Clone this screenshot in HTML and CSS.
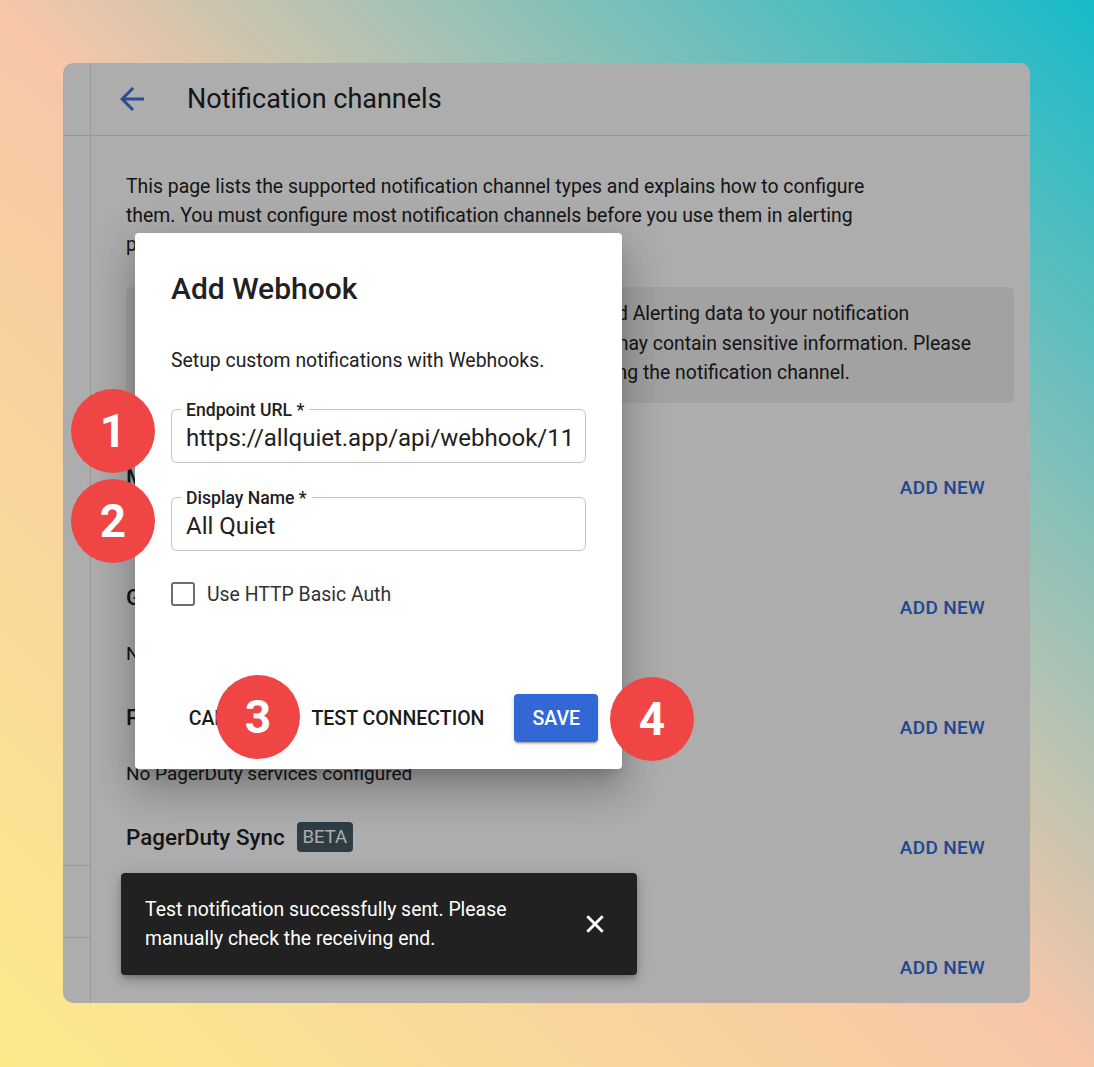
FILE: index.html
```html
<!DOCTYPE html>
<html lang="en">
  <head>
    <meta charset="UTF-8" />
    <meta name="viewport" content="width=device-width, initial-scale=1.0" />
    <title>Notification channels</title>
    <link rel="stylesheet" href="styles.css">
  </head>
  <body>
    <div class="app">
      <aside class="rail">
        <div class="rail-top"></div>
        <div class="rail-fill"></div>
        <div class="rail-item"></div>
        <div class="rail-item last"></div>
      </aside>

      <main class="main">
        <header class="topbar">
          <svg class="back" viewBox="0 0 24 24" width="36" height="36">
            <path d="M20 11H7.83l5.59-5.59L12 4l-8 8 8 8 1.41-1.41L7.83 13H20v-2z" />
          </svg>
          <h1>Notification channels</h1>
        </header>

        <section class="content">
          <p class="intro">
            This page lists the supported notification channel types and explains how to configure
            them. You must configure most notification channels before you use them in alerting
            policies.
          </p>

          <div class="notice">
            By connecting a channel, All Quiet will send Incident and Alerting data to your notification<br />
            channels. Please be aware, that all these notifications may contain sensitive information. Please<br />
            review who has access to this channel before configuring the notification channel.
          </div>

          <ul class="channels">
            <li class="channel">
              <div>
                <h2>Microsoft Teams</h2>
                <p>No Microsoft Teams channels configured</p>
              </div>
              <button class="add">Add new</button>
            </li>
            <li class="channel">
              <div>
                <h2>Google Chat</h2>
                <p>No Google Chat spaces configured</p>
              </div>
              <button class="add">Add new</button>
            </li>
            <li class="channel">
              <div>
                <h2>PagerDuty</h2>
                <p>No PagerDuty services configured</p>
              </div>
              <button class="add">Add new</button>
            </li>
            <li class="channel">
              <div>
                <h2>PagerDuty Sync <span class="chip">BETA</span></h2>
                <p>No PagerDuty Sync configured</p>
              </div>
              <button class="add">Add new</button>
            </li>
            <li class="channel">
              <div>
                <h2>Slack</h2>
              </div>
              <button class="add">Add new</button>
            </li>
          </ul>
        </section>
      </main>

      <div class="scrim"></div>

      <div class="dialog">
        <h3>Add Webhook</h3>
        <p class="dialog-text">Setup custom notifications with Webhooks.</p>

        <div class="field">
          <label for="endpoint">Endpoint URL *</label>
          <input id="endpoint" type="text" value="https://allquiet.app/api/webhook/11" />
        </div>

        <div class="field">
          <label for="display-name">Display Name *</label>
          <input id="display-name" type="text" value="All Quiet" />
        </div>

        <label class="check">
          <span class="box"></span>
          Use HTTP Basic Auth
        </label>

        <div class="actions">
          <button class="text-btn cancel">Cancel</button>
          <button class="text-btn test">Test connection</button>
          <button class="save">Save</button>
        </div>
      </div>

      <div class="snackbar">
        <p>Test notification successfully sent. Please manually check the receiving end.</p>
        <button class="close" aria-label="Close">
          <svg viewBox="0 0 20 20" width="22" height="22">
            <path d="M3 3L17 17M17 3L3 17" />
          </svg>
        </button>
      </div>

      <span class="step step-1">1</span>
      <span class="step step-2">2</span>
      <span class="step step-3">3</span>
      <span class="step step-4">4</span>
    </div>
  </body>
</html>
```

FILE: styles.css
```css
* {
  box-sizing: border-box;
}
body {
  margin: 0;
  width: 1094px;
  height: 1067px;
  overflow: hidden;
  font-family: Roboto, "Liberation Sans", sans-serif;
  color: #212121;
  background: linear-gradient(to top right, #fde98c 0%, #f6c6a8 50%, #16bac8 100%);
}
.app {
  position: relative;
  display: flex;
  margin: 63px 0 0 63px;
  width: 967px;
  height: 940px;
  border-radius: 10px;
  overflow: hidden;
  background: white;
}

/* left rail */
.rail {
  display: flex;
  flex-direction: column;
  width: 28px;
  border-right: 1px solid #e2e2e2;
}
.rail-top {
  height: 73px;
  border-bottom: 1px solid #e2e2e2;
}
.rail-fill {
  flex: 1;
}
.rail-item {
  height: 72px;
  border-top: 1px solid #e2e2e2;
}
.rail-item.last {
  height: 66px;
}

/* main column */
.main {
  flex: 1;
  min-width: 0;
}
.topbar {
  display: flex;
  align-items: center;
  height: 73px;
  padding-left: 23px;
  border-bottom: 1px solid #e2e2e2;
}
.back {
  fill: #4272da;
}
.topbar h1 {
  margin: 0 0 0 37px;
  font-size: 27px;
  font-weight: 400;
}
.content {
  padding: 36px 16px 0 35px;
}
.intro {
  margin: 0;
  max-width: 770px;
  font-size: 19.4px;
  line-height: 29px;
}
.notice {
  margin-top: 28px;
  height: 116px;
  padding: 12px 20px 0 20px;
  border-radius: 6px;
  background: #efefef;
  font-size: 19.4px;
  line-height: 29.5px;
  white-space: nowrap;
  overflow: hidden;
}
.channels {
  list-style: none;
  margin: 34px 0 0;
  padding: 0;
}
.channel {
  display: flex;
  justify-content: space-between;
  align-items: flex-start;
  height: 120px;
}
.channel h2 {
  display: flex;
  align-items: center;
  margin: 25px 0 0;
  height: 30px;
  font-size: 22.4px;
  font-weight: 500;
}
.channel p {
  margin: 29px 0 0;
  font-size: 19px;
  line-height: 26px;
}
.chip {
  margin-left: 12px;
  padding: 0 6px;
  height: 30px;
  line-height: 30px;
  border-radius: 4px;
  background: #455a64;
  color: #fff;
  font-size: 18.5px;
  font-weight: 400;
}
.add {
  margin: 32px 21px 0 0;
  height: 36px;
  padding: 0 8px;
  border: none;
  background: none;
  color: #3367d6;
  font-family: inherit;
  font-size: 19px;
  font-weight: 500;
  letter-spacing: 0.3px;
  text-transform: uppercase;
}

/* overlays */
.scrim {
  position: absolute;
  inset: 0;
  background: rgba(0, 0, 0, 0.32);
  z-index: 1;
}
.dialog {
  position: absolute;
  left: 72px;
  top: 170px;
  width: 487px;
  height: 536px;
  padding: 39px 36px 0;
  background: white;
  border-radius: 4px;
  box-shadow: 0 11px 15px -7px rgba(0, 0, 0, 0.2), 0 24px 38px 3px rgba(0, 0, 0, 0.14),
    0 9px 46px 8px rgba(0, 0, 0, 0.12);
  z-index: 2;
}
.dialog h3 {
  margin: 0;
  font-size: 30px;
  line-height: 34px;
  font-weight: 500;
}
.dialog-text {
  margin: 42px 0 0;
  font-size: 19.4px;
  line-height: 26px;
}
.field {
  position: relative;
  margin-top: 35px;
  height: 54px;
  border: 1px solid #c4c4c4;
  border-radius: 6px;
}
.field + .field {
  margin-top: 34px;
}
.field label {
  position: absolute;
  left: 9px;
  top: -10px;
  padding: 0 5px;
  background: white;
  font-size: 17.6px;
  line-height: 20px;
  font-weight: 500;
}
.field input {
  width: 100%;
  height: 52px;
  padding: 4px 1px 0 14px;
  border: none;
  outline: none;
  background: none;
  border-radius: 6px;
  font-family: inherit;
  font-size: 24px;
  color: #212121;
}
.check {
  display: flex;
  align-items: center;
  gap: 12px;
  margin-top: 31px;
  font-size: 19.4px;
  color: #333;
}
.box {
  width: 24px;
  height: 24px;
  border: 2px solid #6e6e6e;
  border-radius: 3px;
}
.actions {
  display: flex;
  justify-content: flex-end;
  align-items: center;
  margin: 88px -12px 0 0;
}
.text-btn {
  height: 48px;
  padding: 0 12px;
  border: none;
  background: none;
  color: #1a1a1a;
  font-family: inherit;
  font-size: 19.5px;
  font-weight: 500;
  text-transform: uppercase;
}
.cancel {
  margin-right: 25px;
}
.test {
  margin-right: 18px;
}
.save {
  height: 48px;
  padding: 0 18px;
  border: none;
  border-radius: 4px;
  background: #3367d6;
  color: white;
  font-family: inherit;
  font-size: 19.5px;
  font-weight: 500;
  text-transform: uppercase;
  box-shadow: 0 3px 1px -2px rgba(0, 0, 0, 0.2), 0 2px 2px rgba(0, 0, 0, 0.14),
    0 1px 5px rgba(0, 0, 0, 0.12);
}

.snackbar {
  position: absolute;
  left: 58px;
  top: 810px;
  width: 516px;
  height: 102px;
  display: flex;
  align-items: center;
  justify-content: space-between;
  padding: 0 18px 0 24px;
  background: #212121;
  border-radius: 4px;
  box-shadow: 0 3px 5px -1px rgba(0, 0, 0, 0.2), 0 6px 10px rgba(0, 0, 0, 0.14),
    0 1px 18px rgba(0, 0, 0, 0.12);
  z-index: 3;
}
.snackbar p {
  margin: 0;
  max-width: 400px;
  color: #fff;
  font-size: 19.4px;
  line-height: 29px;
}
.close {
  display: flex;
  align-items: center;
  justify-content: center;
  width: 48px;
  height: 48px;
  padding: 0;
  border: none;
  background: none;
}
.close path {
  stroke: #fff;
  stroke-width: 2.6;
  fill: none;
}

/* numbered callouts */
.step {
  position: absolute;
  width: 84px;
  height: 84px;
  border-radius: 50%;
  background: #ef4545;
  color: white;
  font-size: 46px;
  font-weight: 700;
  line-height: 84px;
  text-align: center;
  z-index: 4;
}
.step-1 {
  left: 8px;
  top: 326px;
}
.step-2 {
  left: 8px;
  top: 416px;
}
.step-3 {
  left: 153px;
  top: 612px;
}
.step-4 {
  left: 547px;
  top: 614px;
}
```
